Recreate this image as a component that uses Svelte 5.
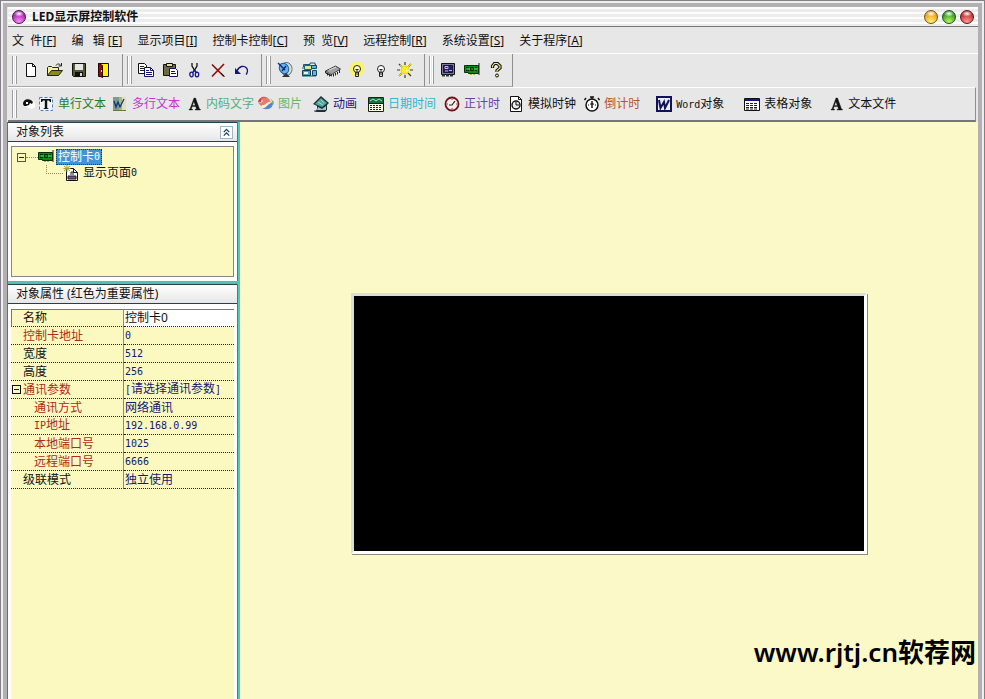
<script>
  const menus = [
    { label: "文  件", key: "F" },
    { label: "编   辑 ", key: "E" },
    { label: "显示项目", key: "I" },
    { label: "控制卡控制", key: "C" },
    { label: "预  览", key: "V" },
    { label: "远程控制", key: "R" },
    { label: "系统设置", key: "S" },
    { label: "关于程序", key: "A" },
  ];

  const groups = [
    [["file", "新建"], ["open", "打开"], ["save", "保存"], ["exit", "退出"]],
    [["copy", "复制"], ["paste", "粘贴"], ["cut", "剪切"], ["remove", "删除"], ["undo", "撤销"]],
    [["dish", "通讯"], ["devices", "设备"], ["chip", "芯片"], ["bulbOn", "开屏"], ["bulbOff", "关屏"], ["sun", "亮度"]],
    [["monitor", "预览"], ["card", "控制卡"], ["help", "帮助"]],
  ];

  const objects = [
    { icon: "singleLine", label: "单行文本", tone: "green", space: "tight" },
    { icon: "multiLine", label: "多行文本", tone: "magenta", space: "tight" },
    { icon: "letter", label: "内码文字", tone: "mint", space: "close" },
    { icon: "picture", label: "图片", tone: "lime-text", space: "mid" },
    { icon: "movie", label: "动画", tone: "navy", space: "mid" },
    { icon: "calendar", label: "日期时间", tone: "cyan", space: "snug" },
    { icon: "clock", label: "正计时", tone: "violet", space: "snug" },
    { icon: "clockPage", label: "模拟时钟", tone: "", space: "snug" },
    { icon: "stopwatch", label: "倒计时", tone: "rust", space: "wide" },
    { icon: "word", label: "Word对象", tone: "", space: "wider" },
    { icon: "grid", label: "表格对象", tone: "", space: "wide" },
    { icon: "letter", label: "文本文件", tone: "", space: "wide" },
  ];

  const rows = [
    { label: "控制卡地址", value: "0", hot: true },
    { label: "宽度", value: "512" },
    { label: "高度", value: "256" },
    { label: "通讯参数", value: "[请选择通讯参数]", hot: true, parent: true },
    { label: "通讯方式", value: "网络通讯", hot: true, child: true },
    { label: "IP地址", value: "192.168.0.99", hot: true, child: true },
    { label: "本地端口号", value: "1025", hot: true, child: true },
    { label: "远程端口号", value: "6666", hot: true, child: true },
    { label: "级联模式", value: "独立使用" },
  ];

  // all glyphs are drawn on a 16x16 grid
  const icons = {
    file: `<path d="M3.5 1.5h6l3 3v10h-9z" fill="#fff" stroke="#111"/><path d="M9.5 1.5v3h3" fill="none" stroke="#111"/>`,
    open: `<path d="M.5 13.5v-8l1-1h3l1 1h6v3" fill="#f4f0a0" stroke="#222"/><path d="M.5 13.5l4-5h11l-4 5z" fill="#8a8a1c" stroke="#222"/><path d="M9 3.5c1-2 3.5-2 5 0M14.5 1v3h-3" fill="none" stroke="#222"/>`,
    save: `<path d="M1.5 1.5h13v13h-12l-1-1z" fill="#555830" stroke="#111"/><path d="M4 2h8v6H4z" fill="#e6e6e6"/><path d="M4 10h8v4H4z" fill="#111"/><path d="M9 11h2v3H9z" fill="#ddd"/>`,
    exit: `<path d="M3.5 1.5h10v13h-10z" fill="#fff200" stroke="#111"/><path d="M3.5 1.5l4 2v12l-4-2z" fill="#8c1212" stroke="#300"/><path d="M6 8h1v2H6z" fill="#fff"/>`,
    copy: `<path d="M.5 1.500h6l2 2v8h-8z" fill="#fff" stroke="#111"/><path d="M2 4.500h4M2 6.500h4M2 8.500h4" stroke="#222"/><path d="M6.5 5.5h6l3 3v6h-9z" fill="#fff" stroke="#11126a"/><path d="M12.5 5.5v3h3M8 8.5h3M8 10.5h6M8 12.5h6" fill="none" stroke="#11126a"/>`,
    paste: `<path d="M1.5 2.5h12v11h-12z" fill="#6c6c42" stroke="#111"/><path d="M4.5 1.5h6v3h-6z" fill="#e8e088" stroke="#111"/><path d="M7.5 6.5h6l2 2v6h-8z" fill="#fff" stroke="#11126a"/><path d="M9 9.5h4M9 11.5h5" stroke="#11126a"/>`,
    cut: `<path d="M6 1v3l3 5M11 1v3l-3 5" fill="none" stroke="#111" stroke-width="1.3"/><path d="M8.500 8l-2 3M8.500 8l2 3" stroke="#15158c" stroke-width="1.4"/><ellipse cx="5.500" cy="12.500" rx="1.700" ry="2.300" fill="none" stroke="#15158c" stroke-width="1.3"/><ellipse cx="11" cy="12.500" rx="1.700" ry="2.300" fill="none" stroke="#15158c" stroke-width="1.3"/>`,
    remove: `<path d="M2 2.5l12 12M14 2L2 14.5" stroke="#8a1212" stroke-width="1.7"/><path d="M11 11l3.5 3.5" stroke="#111"/>`,
    undo: `<path d="M3 9c2-5 7-6 9.5-3 1.7 2 1 5-.5 6.500" fill="none" stroke="#16167e" stroke-width="1.3"/><path d="M1 6v6h6z" fill="#16167e"/>`,
    dish: `<ellipse cx="9.5" cy="7" rx="5.5" ry="6.5" fill="#c4dae4" stroke="#567"/><ellipse cx="7" cy="6.5" rx="4.5" ry="5.5" transform="rotate(-30 7 6.5)" fill="#64b5ef" stroke="#235a9c"/><path d="M1 1l7 7M5 9l4-5" stroke="#0d2c70" stroke-width="1.4"/><path d="M9 11l-4 4h8z" fill="#333"/><path d="M12 3l2 4-2 4" fill="none" stroke="#e7e7a0" stroke-width="1.3"/>`,
    devices: `<path d="M2.5 5V2.5H9V1h5v1.5h1M1 6h9M1 14h14" fill="none" stroke="#195a73"/><path d="M3.5 3.5h7v4h-7z" fill="#d9e9a0" stroke="#1c5f7a"/><path d="M1.5 8.5h8v5h-8z" fill="#48a5bd" stroke="#153e50"/><path d="M3 10h4v2H3z" fill="#e5f5ee"/><path d="M10.5 3.5h5v3h-5zM11.5 8.5h4v5h-4z" fill="#61b8dc" stroke="#174463"/>`,
    chip: `<path d="M.5 9l10-5 5 3-9 5.500z" fill="#a2a2a2" stroke="#444"/><path d="M.5 9v2l6 3v-2" fill="#777" stroke="#333"/><path d="M8.500 12v2.500M10.500 11v2.500M12.500 10v2.500M14.500 8v3M2.500 11v2.500M4.500 12v2.500" stroke="#222"/><path d="M4 8l7-3" stroke="#ddd"/>`,
    bulbOn: `<circle cx="8" cy="7" r="7.5" fill="#fcf36a"/><circle cx="8" cy="7" r="3.500" fill="#ffffc0" stroke="#222"/><path d="M6.500 10v4.500h3V10M8 7.500V10M6.500 7.500h3M6.500 12h3" fill="none" stroke="#222"/>`,
    bulbOff: `<circle cx="8" cy="7" r="3.500" fill="#fff" stroke="#222"/><path d="M6.500 10v4.500h3V10M8 7.500V10M6.500 7.500h3M6.500 12h3" fill="none" stroke="#222"/>`,
    sun: `<path d="M8 0v3M8 13v3M0 8h3M13 8h3M2 2l3 3M11 11l3 3M14 2l-3 3M2 14l3-3" stroke="#443c00" stroke-width="1.2"/><path d="M3 3l2 2M11 5l3-3M5 11l-3 3" stroke="#eedf00"/><circle cx="8" cy="8" r="4" fill="#ffee1a" stroke="#e3cf28"/><path d="M9 9l3-1M10 6l1-1" stroke="#fff"/>`,
    monitor: `<path d="M1.5 1.5h13v11h-13z" fill="#777b96" stroke="#111"/><path d="M3.5 3.5h9v7h-9z" fill="#20206c" stroke="#16163c"/><path d="M5 4.5h3v2H5zM9 8.5h3M5 9h3" fill="none" stroke="#e3a7cf"/><path d="M2 13.500h12" stroke="#333" stroke-width="2" stroke-dasharray="3 1"/>`,
    card: `<path d="M.5 3.5h14v8H4.5v-1h-4z" fill="#0d8b18" stroke="#05310a"/><path d="M15 1v12" stroke="#222"/><path d="M2 5.5h3M2 8.5h3M6.5 5.5h3v3h-3zM11 5.5h2M11 8.5h2" fill="none" stroke="#052b08"/><path d="M3 7h3M10 7h4" stroke="#5ed660"/><path d="M6 12h2v1H6zM9 12h2v1H9z" fill="#b7b63a"/>`,
    help: `<path d="M4.5 6V4l2-2.500h3L12 4v2L9 8.5V10" fill="none" stroke="#111" stroke-width="3.2"/><path d="M4.5 5.5V4l2-2.500h3L12 4v2L9 8.5V10" fill="none" stroke="#f1ec86" stroke-width="1.1"/><circle cx="9" cy="13.500" r="1.5" fill="#f1ec86" stroke="#111"/>`,
    singleLine: `<path d="M1.5 1.5h13v13h-13z" fill="#eef4fa" stroke="#4f7fae" stroke-dasharray="3 2"/><path d="M3 3h10v3h-1l-1-1.500H9.200V12l1.300.5v.5h-5v-.5l1.300-.5V4.500H5L4 6H3z" fill="#111"/>`,
    multiLine: `<path d="M1 1h13v14H1z" fill="#a8b878"/><path d="M1 1h6v14H1z" fill="#7d9c90"/><path d="M10 1h4v14h-4z" fill="#dfe0c0"/><path d="M2 5l2 6 2-5 2 5 4-8" fill="none" stroke="#14307a" stroke-width="1.3"/><path d="M1 14.500h13" stroke="#6d7540"/>`,
    letter: `<path d="M8 2h1.500l4 11 1 .5v.5H9v-.5l1.500-.5-.8-2.500H6.100L5.300 13l1.400.5v.5H3v-.5l1-.5zM7.900 5.500l-1.500 4h2.900z" fill="#111" stroke="#111" stroke-width=".4" fill-rule="evenodd"/>`,
    picture: `<path d="M0 6C1 1 8-1 10 3 7 1 3 3 3 6z" fill="#dd3840"/><path d="M3 3c3-3 9-1 9 2 2 1 4 1 4 4-2-3-7-3-9 1-3 1-6-1-7-4 2 1 4 1 5-1z" fill="#e97a72"/><path d="M4 12c5 1 5-6 11-5 0 5-5 8-11 5z" fill="#4e85d8"/><path d="M4 9c4 1 6-5 11-3-5 0-6 7-11 5z" fill="#fff7c0"/><path d="M12 2l4 4-2 3c1-3 0-4-2-7z" fill="#68b454"/>`,
    movie: `<path d="M8 0l8 7-2 2v5l-2 2H2l2-3v-3L0 8z" fill="#1d3238"/><path d="M8 2l6 5-5 4-7-3z" fill="#52a89a"/><path d="M5 11l4 2 4-3v4H4z" fill="#a9c4c4"/><path d="M5 6l5 3M8 4l3 3" stroke="#97dbc6"/><path d="M1 15h3" stroke="#244d5b"/>`,
    calendar: `<path d="M.5 1.5h15v14H.5z" fill="#fffde8" stroke="#142414"/><path d="M1 2h14v5H1z" fill="#19723f"/><path d="M2 5l3-2 3 2 3-2 3 2" fill="none" stroke="#b4e2bd"/><path d="M1 7.500h14" stroke="#142414"/><path d="M2 9.5h12M2 11.5h12M2 13.5h12" stroke="#222" stroke-dasharray="2 1"/>`,
    clock: `<circle cx="8" cy="8" r="6.5" fill="#fbecec" stroke="#6c1318" stroke-width="1.800"/><path d="M5 9h3l3-4" fill="none" stroke="#222" stroke-width="1.2"/><path d="M8 3v1M8 12v1M3 8h1M12 8h1" stroke="#b42d32"/>`,
    clockPage: `<path d="M2.5.5h8l3 3v12h-11z" fill="#fff" stroke="#111"/><path d="M10.5.5v3h3" fill="none" stroke="#111"/><circle cx="8" cy="9" r="4" fill="#eee" stroke="#111" stroke-width="1.4"/><path d="M8 6v3h3" fill="none" stroke="#111"/>`,
    stopwatch: `<circle cx="8" cy="9" r="6" fill="#fff" stroke="#111" stroke-width="1.5"/><path d="M8 5v7M8 1v2M6 1h4M2 2L.5 4M14 2l1.500 2" stroke="#111" stroke-width="1.4"/><path d="M4 9h1M11 9h1M6 8l4 0" stroke="#111"/>`,
    word: `<path d="M0 0h16v16H0z" fill="#11125e"/><path d="M2 2h12v12H2z" fill="#eee"/><path d="M3 4l1.500 8L8 6l1 6 4-8" fill="none" stroke="#11125e" stroke-width="2"/>`,
    grid: `<path d="M.5 2.5h15v12H.5z" fill="#fff" stroke="#111"/><path d="M1 3h14v2H1z" fill="#14148c"/><path d="M2 7.5h12M2 9.5h12M2 11.5h12M2 13h12" stroke="#222" stroke-dasharray="3 1"/>`,
    hand: `<path d="M3 9c0-4 4-6 8-5l3 3v4l-3 2-3-1z" fill="#fff"/><path d="M2 8c0-4 4-6 8-4l2 2-1 2-2-1-1 2-3 1-2 0z" fill="#111"/><path d="M5 6l2 0v2H5z" fill="#fff"/>`,
    page: `<path d="M3.5 3.5h7l4 4v8h-11z" fill="#fff" stroke="#111"/><path d="M10.5 3.5v4h4" fill="none" stroke="#111"/><path d="M5 11h8v3H5z" fill="#75568e" stroke="#222"/><path d="M8 10V7h2v3" fill="none" stroke="#222"/><path d="M4 0v7M.5 3.5h7M1 1l6 5M7 1L1 6" stroke="#a3a33a"/>`,
    collapse: `<path d="M4 7.5l4-4 4 4M4 12.5l4-4 4 4" fill="none" stroke="#173a60" stroke-width="1.8"/>`,
  };

  let name = $state("控制卡0");
  let expanded = $state(true);

  // Latin runs are set in a half-width face beside the full-width characters
  const split = (text) => text.match(/[\x20-\x7e]+|[^\x20-\x7e]+/g) ?? [];
  const isLatin = (part) => part.charCodeAt(0) < 128;
</script>

{#snippet icon(id)}
  <svg class="icon" viewBox="0 0 16 16" aria-hidden="true">{@html icons[id]}</svg>
{/snippet}

{#snippet mixed(text)}
  {#each split(text) as part}<span class:half={isLatin(part)}>{part}</span>{/each}
{/snippet}

<div class="window">
  <header class="title">
    <span class="orb purple"></span>
    <h1>LED显示屏控制软件</h1>
    <button class="orb yellow" aria-label="最小化"></button>
    <button class="orb lime" aria-label="最大化"></button>
    <button class="orb red" aria-label="关闭"></button>
  </header>

  <nav class="menu">
    {#each menus as m (m.key)}
      <button>{m.label}[<u>{m.key}</u>]</button>
    {/each}
  </nav>

  <div class="toolbar">
    {#each groups as group}
      <div class="group">
        <span class="grip"></span>
        {#each group as [id, label] (id)}
          <button class="tool" aria-label={label}>{@render icon(id)}</button>
        {/each}
      </div>
    {/each}
  </div>

  <div class="toolbar objects">
    <span class="grip"></span>
    <button class="tool pick" aria-label="选择">{@render icon("hand")}</button>
    {#each objects as o (o.label)}
      <button class="object {o.tone} {o.space}">
        {@render icon(o.icon)}<span>{@render mixed(o.label)}</span>
      </button>
    {/each}
  </div>

  <div class="body">
    <aside>
      <section>
        <h2>
          对象列表
          <button class="fold" aria-label="折叠">{@render icon("collapse")}</button>
        </h2>
        <div class="tree">
          <div class="node">
            <button class="twist" aria-label="展开" onclick={() => (expanded = !expanded)}></button>
            <span class="stem"></span>
            {@render icon("card")}
            <button class="leaf selected">{@render mixed("控制卡0")}</button>
          </div>
          {#if expanded}
            <div class="node sub">
              <span class="elbow"></span>
              {@render icon("page")}
              <button class="leaf">{@render mixed("显示页面0")}</button>
            </div>
          {/if}
        </div>
      </section>

      <section class="props">
        <h2>对象属性 (红色为重要属性)</h2>
        <div class="sheet">
          <table>
            <tbody>
              <tr class="editing">
                <th scope="row"><label for="name">名称</label></th>
                <td><input id="name" bind:value={name} /></td>
              </tr>
              {#each rows as r (r.label)}
                <tr>
                  <th scope="row" class:hot={r.hot} class:child={r.child} class:parent={r.parent}>
                    {#if r.parent}<span class="twist"></span>{/if}{@render mixed(r.label)}
                  </th>
                  <td>{@render mixed(r.value)}</td>
                </tr>
              {/each}
            </tbody>
          </table>
        </div>
      </section>
    </aside>

    <main>
      <div class="screen"></div>
    </main>
  </div>

  <div class="mark">www.rjtj.cn软荐网</div>
</div>

<style>
  :global(body) { background: #e7e7e7; }
  * { box-sizing: border-box; }
  button {
    background: none; border: 0; padding: 0; margin: 0;
    font: inherit; color: inherit; white-space: pre;
  }
  h1, h2 { margin: 0; font-size: 12px; }

  .window {
    position: relative; min-height: calc(100vh - 3px);
    display: flex; flex-direction: column;
    margin: 3px 3px 0; padding-left: 1px;
    border: 4px solid #b2b1b2; border-bottom: 0;
    box-shadow: 0 0 0 2px #f0edf2, 0 0 0 3px #858085;
    font: 12px/16px "Noto Sans", "Noto Sans CJK SC", sans-serif; color: #111;
    background: #e7e7e7;
  }

  .title {
    display: flex; align-items: center; gap: 4px;
    height: 20px; padding: 0 4px; border-bottom: 1px solid #77777a;
    background: repeating-linear-gradient(#fdfdfd 0 2px, #ececec 2px 5px);
  }
  h1 { flex: 1; padding: 1px 0 0 2px; font-weight: 700; color: #111; }
  .orb { width: 14px; height: 14px; border-radius: 50%; flex: none; border: 1px solid #333; }
  .purple { background: radial-gradient(ellipse 5px 3px at 50% 22%, #fff, transparent), radial-gradient(circle at 50% 90%, #ff8cff, #a32aa5 70%); border-color: #4d1450; }
  .yellow { background: radial-gradient(ellipse 5px 3px at 50% 22%, #fff, transparent), radial-gradient(circle at 50% 90%, #fff66e, #eb9b1c 70%); border-color: #77531c; }
  .lime { background: radial-gradient(ellipse 5px 3px at 50% 22%, #fff, transparent), radial-gradient(circle at 50% 90%, #b9f95b, #36952a 70%); border-color: #1e5017; }
  .red { background: radial-gradient(ellipse 5px 3px at 50% 22%, #fff, transparent), radial-gradient(circle at 50% 90%, #ff9a93, #c03036 70%); border-color: #5b1518; }

  .menu { display: flex; gap: 15px; padding: 6px 4px 4px; }

  .toolbar {
    display: flex; height: 34px;
    border-top: 1px solid #fff;
  }
  .group {
    display: flex; align-items: center; padding-right: 7px;
    border-right: 1px solid #8f8f8f; border-bottom: 1px solid #a8a8a8;
  }
  .group:last-child { padding-right: 4px; }
  .grip {
    width: 5px; height: 28px; margin: 0 2px 0 4px; flex: none;
    border: solid #9c9c9c; border-width: 0 1px;
    background: linear-gradient(90deg, #fff 1px, #e7e7e7 1px 2px, #fff 2px);
  }
  .tool { width: 24px; height: 24px; display: grid; place-items: center; flex: none; }
  .icon { width: 16px; height: 16px; flex: none; display: block; }

  .objects {
    align-items: center; height: 35px; margin-right: 2px;
    border-right: 1px solid #8f8f8f; border-bottom: 2px solid #76767a;
  }
  .pick { width: 19px; }
  .object { display: flex; align-items: center; gap: 4px; flex: none; }
  .close { margin-right: 4px; }
  .tight { margin-right: 6px; }
  .snug { margin-right: 8px; }
  .mid { margin-right: 11px; }
  .wide { margin-right: 16px; }
  .wider { margin-right: 20px; }
  .half { font: 10px/16px "DejaVu Sans Mono", monospace; }

  .green { color: #1f7f28; }
  .magenta { color: #c433cc; }
  .mint { color: #4fb083; }
  .lime-text { color: #6fb55e; }
  .navy { color: #1c1680; }
  .cyan { color: #2db8cc; }
  .violet { color: #6a3fa6; }
  .rust { color: #b4552a; }

  .body { display: flex; flex: 1; margin-left: -1px; border-left: 1px solid #6f6d70; }
  aside {
    width: 232px; flex: none; display: flex; flex-direction: column; gap: 3px;
    background: #57bfae; border-right: 2px solid #4fcbb8;
  }
  section { background: #fff; border-right: 1px solid #2f8a86; }
  h2 {
    display: flex; align-items: center; justify-content: space-between;
    height: 20px; padding: 0 4px 0 8px; font-weight: 400;
    border: solid #27404e; border-width: 1px 0;
    background: linear-gradient(#fff, #e6e6e6);
  }
  .fold { width: 13px; height: 13px; border: 1px solid #a3b4c6; background: #fff; }
  .fold .icon { width: 11px; height: 11px; }

  .tree {
    height: 131px; margin: 4px 3px; padding: 2px 5px;
    border: 1px solid #858585; background: #fbf9c0;
  }
  .node { display: flex; align-items: center; height: 16px; }
  .twist {
    width: 9px; height: 9px; flex: none; border: 1px solid #555;
    background: linear-gradient(#222, #222) center / 5px 1px no-repeat;
  }
  .stem { width: 12px; border-top: 1px dotted #8e8e5c; }
  .leaf { display: flex; height: 16px; margin-left: 2px; padding: 0 2px; }
  .selected { background: #4394d6; color: #fff; outline: 1px dotted #12385c; outline-offset: -1px; }
  .sub { padding-left: 29px; }
  .elbow {
    width: 17px; height: 9px; align-self: flex-start;
    border: dotted #8e8e5c; border-width: 0 0 1px 1px;
  }

  .props { flex: 1; display: flex; flex-direction: column; }
  .sheet { flex: 1; margin: 5px 3px 0; background: #fbf9c0; }
  table {
    width: 100%; table-layout: fixed;
    border-collapse: separate; border-spacing: 0;
  }
  th, td {
    height: 18px; padding: 0; text-align: left; font-weight: 400; line-height: 16px;
    border-bottom: 1px dotted #222; white-space: nowrap;
  }
  th { width: 113px; padding-left: 12px; border-right: 1px solid #8a8a8a; }
  td { color: #17176e; padding-left: 1px; }
  .hot { color: #b02a14; }
  .child { padding-left: 23px; }
  .parent { padding-left: 1px; }
  .parent .twist { display: inline-block; margin-right: 2px; border-color: #111; }
  .editing th { border-top: 1px solid #777; border-left: 1px solid #777; padding-left: 11px; }
  .editing td { border-top: 1px solid #777; background: #fff; }
  input {
    display: block; width: 100%; height: 16px; border: 0; padding: 0; background: #fff;
    font: inherit; color: #111; outline: 0;
  }

  main { flex: 1; padding-top: 171px; background: #fbf9c8; }
  .screen {
    width: 516px; height: 261px; max-width: 100%; margin: 0 auto;
    background: #000; border: solid #fff; border-width: 3px;
    border-top-color: #dcdcd8; border-left-color: #dcdcd8;
    box-shadow: 1px 1px #8c8c84;
  }

  /* site mark lies over the bottom right of the canvas */
  .mark {
    position: absolute; right: 2px; bottom: 30px;
    font: 600 26px/34px "Noto Sans", "Noto Sans CJK SC", sans-serif; color: #000;
  }
</style>
